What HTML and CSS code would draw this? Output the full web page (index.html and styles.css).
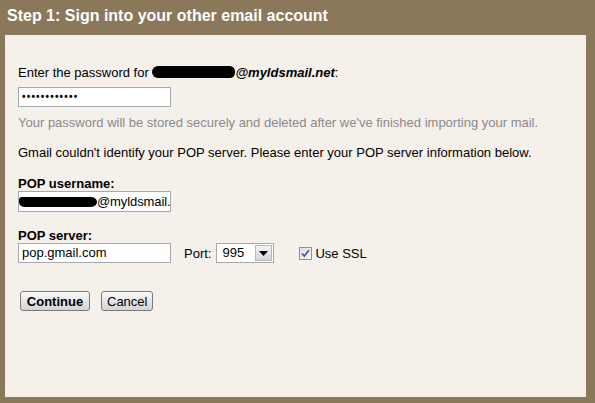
FILE: index.html
```html
<!DOCTYPE html>
<html>
<head>
<meta charset="utf-8">
<link rel="stylesheet" href="styles.css">
</head>
<body>
<div class="page">
  <div class="title">Step 1: Sign into your other email account</div>
  <div class="panel">
    <div class="line">Enter the password for <span class="blob blob1"></span><b><i>@myldsmail.net</i></b>:</div>
    <div class="field pw"><span class="dots">••••••••••••</span></div>
    <div class="line hint">Your password will be stored securely and deleted after we've finished importing your mail.</div>
    <div class="line notice">Gmail couldn't identify your POP server. Please enter your POP server information below.</div>
    <div class="label">POP username:</div>
    <div class="field user"><span class="blob blob2"></span><span class="user-text">@myldsmail.</span></div>
    <div class="label label2">POP server:</div>
    <div class="server-row">
      <div class="field server">pop.gmail.com</div>
      <span class="port-label">Port:</span>
      <div class="select"><span class="select-val">995</span><span class="select-btn"><svg width="9" height="5" viewBox="0 0 9 5"><path d="M0 0H9L4.5 5Z" fill="#000"/></svg></span></div>
      <span class="check"><svg width="9" height="9" viewBox="0 0 9 9"><path d="M1 4.5L3.3 7L8 1.2" stroke="#3a5fa8" stroke-width="1.8" fill="none"/></svg></span>
      <span class="ssl">Use SSL</span>
    </div>
    <div class="buttons">
      <button class="btn primary">Continue</button>
      <button class="btn">Cancel</button>
    </div>
  </div>
</div>
</body>
</html>
```
FILE: styles.css
```css
html, body {
  margin: 0;
  padding: 0;
}
body {
  background: #8b7759;
  font-family: "Liberation Sans", Arial, sans-serif;
  font-size: 13px;
  color: #000;
}
.page {
  height: 403px;
  box-sizing: border-box;
  padding: 0 9px 6px 5px;
  display: flex;
  flex-direction: column;
}
.title {
  height: 35px;
  flex: none;
  box-sizing: border-box;
  padding: 6px 0 0 2px;
  color: #fff;
  font-weight: bold;
  font-size: 16px;
  line-height: 20px;
}
.panel {
  flex: 1;
  background: #f5f0ea;
  padding: 30px 0 0 13px;
}
.line {
  line-height: 15px;
  white-space: nowrap;
}
.blob {
  display: inline-block;
  background: #000;
  vertical-align: middle;
}
.blob1 {
  width: 83px;
  height: 12px;
  border-radius: 7px 6px 6px 7px;
  margin-top: -3px;
}
.field {
  width: 153px;
  height: 20px;
  box-sizing: border-box;
  border: 1px solid #a5a9ad;
  background: #fff;
  padding: 0 3px;
  line-height: 18px;
  white-space: nowrap;
  overflow: hidden;
}
.pw {
  margin-top: 7px;
}
.dots {
  font-size: 10px;
  letter-spacing: 1.2px;
  font-weight: bold;
  vertical-align: top;
  line-height: 18px;
}
.hint {
  margin-top: 8px;
  color: #8a8a8a;
}
.notice {
  margin-top: 15px;
}
.label {
  margin-top: 17px;
  font-weight: bold;
  line-height: 14px;
}
.label2 {
  margin-top: 17px;
}
.user {
  height: 21px;
  line-height: 19px;
  padding-left: 0;
  padding-right: 0;
}
.user-text {
  letter-spacing: -0.1px;
}
.blob2 {
  width: 78px;
  height: 10px;
  border-radius: 3px 6px 6px 5px / 3px 5px 5px 5px;
  margin-top: -2px;
}
.server-row {
  display: flex;
  align-items: center;
  height: 20px;
}
.port-label {
  margin-left: 13px;
}
.select {
  margin-left: 5px;
  width: 58px;
  height: 20px;
  box-sizing: border-box;
  border: 1px solid #a5a9ad;
  background: #fff;
  display: flex;
  padding: 1px;
}
.select-val {
  flex: 1;
  padding-left: 4px;
  line-height: 16px;
}
.select-btn {
  width: 17px;
  box-sizing: border-box;
  border: 1px solid #b8b8b8;
  background: linear-gradient(#f4f4f4, #d4d4d4);
  display: flex;
  align-items: center;
  justify-content: center;
}
.check {
  margin-left: 25px;
  width: 13px;
  height: 13px;
  box-sizing: border-box;
  border: 1px solid #8e9398;
  background: linear-gradient(135deg, #dcdcd8, #fafafa);
  display: flex;
  align-items: center;
  justify-content: center;
}
.ssl {
  margin-left: 3px;
}
.buttons {
  margin-top: 28px;
  margin-left: 2px;
  display: flex;
  gap: 11px;
}
.btn {
  font-family: "Liberation Sans", Arial, sans-serif;
  font-size: 13px;
  height: 20px;
  padding: 0 5px;
  border: 1px solid #7a7a7a;
  border-radius: 3px;
  background: linear-gradient(#fafafa, #e6e6e6 50%, #d4d4d4);
  color: #000;
  line-height: 17px;
}
.primary {
  font-weight: bold;
  width: 70px;
}
```
